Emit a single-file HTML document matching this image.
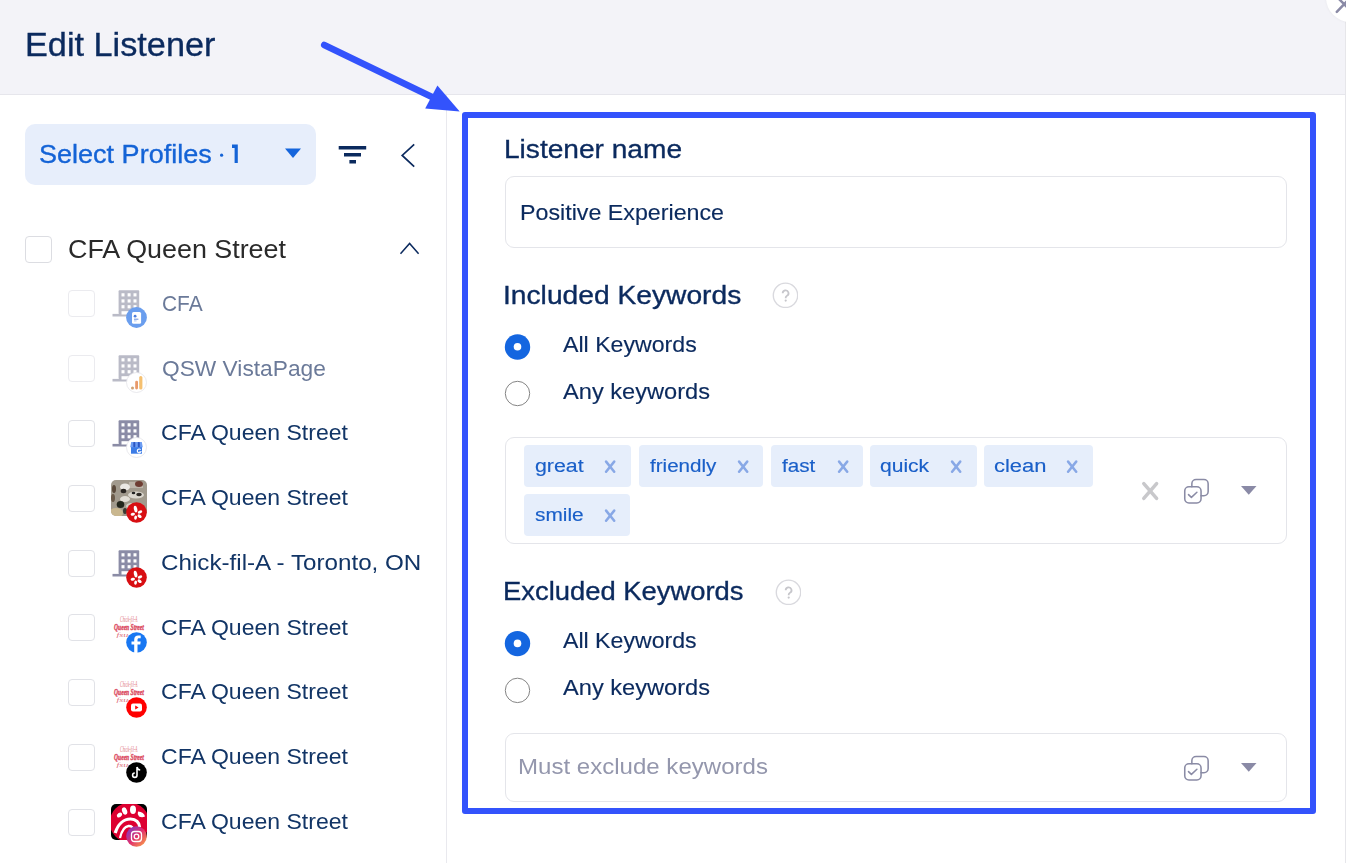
<!DOCTYPE html>
<html><head><meta charset="utf-8"><style>
html,body{margin:0;padding:0;width:1346px;height:863px;overflow:hidden;background:#fff;font-family:"Liberation Sans",sans-serif}
.abs{position:absolute}
.t{position:absolute;white-space:nowrap;transform-origin:0 0}
.cb{position:absolute;width:25px;height:25px;border:1px solid #dcdde2;border-radius:4px;box-sizing:content-box}
.chip{position:absolute;background:#e6eefb;border-radius:4px}
.box{position:absolute;border:1px solid #e4e5ea;border-radius:9px;background:#fff}
.photo{width:36px;height:36px;border-radius:5px;overflow:hidden;background:
 radial-gradient(circle at 30% 70%, #2f2f28 0 4px, transparent 5px),
 radial-gradient(circle at 65% 40%, #1e1e1e 0 3px, transparent 4px),
 radial-gradient(circle at 20% 30%, #e8e4dc 0 4px, transparent 5px),
 radial-gradient(circle at 80% 15%, #6b2a20 0 3px, transparent 4px),
 linear-gradient(135deg,#8d857a,#b4ad9f 40%,#6f685c 70%,#c9b68f)}
</style></head><body>
<div class="abs" style="left:0;top:0;width:1346px;height:94px;background:#f3f3f8;border-bottom:1px solid #e6e6ec"></div>
<div class="abs" style="left:446px;top:95px;width:1px;height:768px;background:#e9e9ee"></div>
<div class="abs" style="left:1345px;top:0;width:1px;height:863px;background:#e6e6ea"></div>
<div class="abs" style="left:1325.5px;top:-27.5px;width:49px;height:49px;border-radius:50%;background:#fff;box-shadow:0 0 3px rgba(0,0,0,0.06)"></div>
<svg class="abs" style="left:1333.5px;top:-6.3px" width="20" height="20" viewBox="0 0 20 20"><path d="M2.8 17.8L17.5 2.5M2.5 2.5L17.5 17.5" stroke="#8a8aa6" stroke-width="2.5" stroke-linecap="round"/></svg>

<div class="abs" style="left:25px;top:124px;width:291px;height:61px;background:#e7eefb;border-radius:10px"></div>
<svg class="abs" style="left:215px;top:140px" width="30" height="28" viewBox="215 140 30 28"><circle cx="221.6" cy="155.2" r="1.6" fill="#1463d6"/><path d="M234.6 144.5h3.2v18.6h-3.2V148.1h-2.6v-3.6z" fill="#1463d6"/></svg>
<svg class="abs" style="left:284px;top:148px" width="18" height="11" viewBox="0 0 18 11"><path d="M1 0.5h16L9 10z" fill="#1565dc"/></svg>
<svg class="abs" style="left:337px;top:144px" width="32" height="22" viewBox="0 0 32 22"><path d="M1.7 3.8h27.5M7 10.7h17M12.4 17.7h6.6" stroke="#0b2a5e" stroke-width="3.5"/></svg>
<svg class="abs" style="left:398px;top:141px" width="20" height="28" viewBox="0 0 20 28"><path d="M16.2 3.4L4.2 14.4l12 11.3" fill="none" stroke="#0b2a5e" stroke-width="1.7"/></svg>

<div class="cb" style="left:25px;top:236px"></div>
<svg class="abs" style="left:396px;top:238px" width="28" height="20" viewBox="0 0 28 20"><path d="M4.5 15.8L13.6 5.4L22.6 15.8" fill="none" stroke="#0b2a5e" stroke-width="1.5"/></svg>
<svg class="abs" style="left:111px;top:285px" width="36" height="36" viewBox="0 0 36 36"><rect x="7.6" y="5.35" width="20.6" height="23.8" rx="0.8" fill="#babbc7"/><rect x="1.5" y="28.9" width="14.5" height="2.6" fill="#babbc7"/><rect x="10.5" y="8.25" width="3" height="3.2" fill="#fff"/><rect x="10.5" y="14.35" width="3" height="3.2" fill="#fff"/><rect x="10.5" y="20.15" width="3" height="3.2" fill="#fff"/><rect x="16.6" y="8.25" width="3" height="3.2" fill="#fff"/><rect x="16.6" y="14.35" width="3" height="3.2" fill="#fff"/><rect x="16.6" y="20.15" width="3" height="3.2" fill="#fff"/><rect x="22.5" y="8.25" width="3" height="3.2" fill="#fff"/><rect x="22.5" y="14.35" width="3" height="3.2" fill="#fff"/><rect x="22.5" y="20.15" width="3" height="3.2" fill="#fff"/><rect x="10.5" y="26.2" width="9" height="3.3" fill="#fff"/></svg><svg class="abs" style="left:126.0px;top:307.4px" width="21" height="21" viewBox="0 0 21 21"><circle cx="10.5" cy="10.5" r="10.4" fill="#6a9eee"/><rect x="6" y="5" width="9.1" height="11.8" rx="1.6" fill="#fff"/><circle cx="9.1" cy="9.2" r="1.4" fill="#4f7fdc"/><path d="M8 12.2h4.4" stroke="#5580d8" stroke-width="0.9"/><path d="M8 13.9h2.6" stroke="#9ab8ee" stroke-width="0.8"/></svg><div class="cb" style="left:68px;top:290.0px;border-color:#ebebef"></div><svg class="abs" style="left:111px;top:349.9px" width="36" height="36" viewBox="0 0 36 36"><rect x="7.6" y="5.35" width="20.6" height="23.8" rx="0.8" fill="#babbc7"/><rect x="1.5" y="28.9" width="14.5" height="2.6" fill="#babbc7"/><rect x="10.5" y="8.25" width="3" height="3.2" fill="#fff"/><rect x="10.5" y="14.35" width="3" height="3.2" fill="#fff"/><rect x="10.5" y="20.15" width="3" height="3.2" fill="#fff"/><rect x="16.6" y="8.25" width="3" height="3.2" fill="#fff"/><rect x="16.6" y="14.35" width="3" height="3.2" fill="#fff"/><rect x="16.6" y="20.15" width="3" height="3.2" fill="#fff"/><rect x="22.5" y="8.25" width="3" height="3.2" fill="#fff"/><rect x="22.5" y="14.35" width="3" height="3.2" fill="#fff"/><rect x="22.5" y="20.15" width="3" height="3.2" fill="#fff"/><rect x="10.5" y="26.2" width="9" height="3.3" fill="#fff"/></svg><svg class="abs" style="left:126.0px;top:372.3px" width="21" height="21" viewBox="0 0 21 21"><circle cx="10.5" cy="10.5" r="10" fill="#fff" stroke="#e3e3e8" stroke-width="0.8"/><rect x="13.2" y="3.9" width="3.2" height="13.5" rx="1.5" fill="#f5c070"/><rect x="9.2" y="8.7" width="2.8" height="8.7" rx="1.4" fill="#e99a6a"/><circle cx="6.5" cy="15.9" r="1.5" fill="#cfa274"/></svg><div class="cb" style="left:68px;top:354.9px;border-color:#ebebef"></div><svg class="abs" style="left:111px;top:414.75px" width="36" height="36" viewBox="0 0 36 36"><rect x="7.6" y="5.35" width="20.6" height="23.8" rx="0.8" fill="#8b8ca6"/><rect x="1.5" y="28.9" width="14.5" height="2.6" fill="#8b8ca6"/><rect x="10.5" y="8.25" width="3" height="3.2" fill="#fff"/><rect x="10.5" y="14.35" width="3" height="3.2" fill="#fff"/><rect x="10.5" y="20.15" width="3" height="3.2" fill="#fff"/><rect x="16.6" y="8.25" width="3" height="3.2" fill="#fff"/><rect x="16.6" y="14.35" width="3" height="3.2" fill="#fff"/><rect x="16.6" y="20.15" width="3" height="3.2" fill="#fff"/><rect x="22.5" y="8.25" width="3" height="3.2" fill="#fff"/><rect x="22.5" y="14.35" width="3" height="3.2" fill="#fff"/><rect x="22.5" y="20.15" width="3" height="3.2" fill="#fff"/><rect x="10.5" y="26.2" width="9" height="3.3" fill="#fff"/></svg><svg class="abs" style="left:126.0px;top:437.1px" width="21" height="21" viewBox="0 0 21 21"><circle cx="10.5" cy="10.5" r="10" fill="#fff" stroke="#e3e3e8" stroke-width="0.8"/><rect x="5" y="9.5" width="11" height="7.2" fill="#3c7ce6"/><path d="M5.2 4.9h10.6l1 5.3H4.2z" fill="#6c9cf2"/><rect x="7.3" y="4.9" width="2" height="5.4" rx="0.8" fill="#2b55c2"/><rect x="11.8" y="4.9" width="2" height="5.4" rx="0.8" fill="#2b55c2"/><path d="M14.6 12.6a1.9 1.9 0 1 0 0.3 2.2h-1.5" fill="none" stroke="#fff" stroke-width="1.2"/></svg><div class="cb" style="left:68px;top:419.8px;border-color:#e1e2e7"></div><svg class="abs" style="left:111px;top:479.6px" width="36" height="36" viewBox="0 0 36 36"><defs><clipPath id="pc"><rect width="36" height="36" rx="5"/></clipPath><filter id="bl"><feGaussianBlur stdDeviation="0.7"/></filter></defs><g clip-path="url(#pc)"><rect width="36" height="36" fill="#a19a8d"/><g filter="url(#bl)"><rect x="18" y="2" width="14" height="6" fill="#bdb6aa"/><ellipse cx="14" cy="7" rx="5" ry="3.5" fill="#ebe9e4"/><ellipse cx="25" cy="15" rx="8" ry="3.5" fill="#dcd8d0"/><ellipse cx="14" cy="19" rx="5" ry="3" fill="#e2ded6"/><ellipse cx="28" cy="4" rx="4" ry="3" fill="#6e3c33"/><ellipse cx="12.5" cy="11" rx="2.8" ry="2.2" fill="#2a2622"/><ellipse cx="22.5" cy="13" rx="1.8" ry="1.3" fill="#222"/><ellipse cx="28" cy="14.5" rx="2.8" ry="1.8" fill="#2e2b26"/><ellipse cx="3" cy="9" rx="2" ry="4" fill="#5a4a3a"/><ellipse cx="2" cy="18" rx="2" ry="4" fill="#6a5a48"/><ellipse cx="9.5" cy="24.5" rx="3.8" ry="3.6" fill="#24261f"/><ellipse cx="5" cy="33" rx="7" ry="5" fill="#c9b78f"/><ellipse cx="20" cy="26" rx="5" ry="3" fill="#d4d0c6"/><ellipse cx="14" cy="31" rx="2" ry="3" fill="#3a3a32"/></g></g></svg><svg class="abs" style="left:126.0px;top:502.0px" width="21" height="21" viewBox="0 0 21 21"><circle cx="10.5" cy="10.5" r="10.3" fill="#d80e12"/><g fill="#fff"><ellipse cx="9.6" cy="7.2" rx="1.7" ry="3.4" transform="rotate(-12 9.6 7.2)"/><ellipse cx="14" cy="10" rx="2.4" ry="1.5" transform="rotate(-25 14 10)"/><ellipse cx="13.6" cy="14.2" rx="2.3" ry="1.5" transform="rotate(35 13.6 14.2)"/><ellipse cx="9.6" cy="15.6" rx="1.4" ry="2.2" transform="rotate(10 9.6 15.6)"/><ellipse cx="6.8" cy="12.2" rx="2.2" ry="1.5" transform="rotate(-10 6.8 12.2)"/></g></svg><div class="cb" style="left:68px;top:484.6px;border-color:#e1e2e7"></div><svg class="abs" style="left:111px;top:544.5px" width="36" height="36" viewBox="0 0 36 36"><rect x="7.6" y="5.35" width="20.6" height="23.8" rx="0.8" fill="#8b8ca6"/><rect x="1.5" y="28.9" width="14.5" height="2.6" fill="#8b8ca6"/><rect x="10.5" y="8.25" width="3" height="3.2" fill="#fff"/><rect x="10.5" y="14.35" width="3" height="3.2" fill="#fff"/><rect x="10.5" y="20.15" width="3" height="3.2" fill="#fff"/><rect x="16.6" y="8.25" width="3" height="3.2" fill="#fff"/><rect x="16.6" y="14.35" width="3" height="3.2" fill="#fff"/><rect x="16.6" y="20.15" width="3" height="3.2" fill="#fff"/><rect x="22.5" y="8.25" width="3" height="3.2" fill="#fff"/><rect x="22.5" y="14.35" width="3" height="3.2" fill="#fff"/><rect x="22.5" y="20.15" width="3" height="3.2" fill="#fff"/><rect x="10.5" y="26.2" width="9" height="3.3" fill="#fff"/></svg><svg class="abs" style="left:126.0px;top:566.9px" width="21" height="21" viewBox="0 0 21 21"><circle cx="10.5" cy="10.5" r="10.3" fill="#d80e12"/><g fill="#fff"><ellipse cx="9.6" cy="7.2" rx="1.7" ry="3.4" transform="rotate(-12 9.6 7.2)"/><ellipse cx="14" cy="10" rx="2.4" ry="1.5" transform="rotate(-25 14 10)"/><ellipse cx="13.6" cy="14.2" rx="2.3" ry="1.5" transform="rotate(35 13.6 14.2)"/><ellipse cx="9.6" cy="15.6" rx="1.4" ry="2.2" transform="rotate(10 9.6 15.6)"/><ellipse cx="6.8" cy="12.2" rx="2.2" ry="1.5" transform="rotate(-10 6.8 12.2)"/></g></svg><div class="cb" style="left:68px;top:549.5px;border-color:#e1e2e7"></div><svg class="abs" style="left:111px;top:609.4px" width="36" height="36" viewBox="0 0 36 36"><g fill="#e0707c" font-family="Liberation Serif" font-style="italic"><text x="9" y="12.6" font-size="7.5" textLength="17.5" lengthAdjust="spacingAndGlyphs">Chick-fil-A</text><text x="3.1" y="21.3" font-size="8.6" font-weight="bold" textLength="29.7" lengthAdjust="spacingAndGlyphs" fill="#dc5066" stroke="#dc5066" stroke-width="0.5">Queen Street</text><text x="5.5" y="27.6" font-size="6" textLength="12" lengthAdjust="spacingAndGlyphs">fsu</text></g></svg><svg class="abs" style="left:126.0px;top:631.8px" width="21" height="21" viewBox="0 0 21 21"><circle cx="10.5" cy="10.5" r="10.3" fill="#1877f2"/><path d="M11.5 21V12.5h2.8l.4-3h-3.2V7.8c0-.9.3-1.5 1.5-1.5h1.7V3.6c-.3 0-1.3-.1-2.5-.1-2.4 0-4 1.5-4 4.1v2h-2.7v3h2.7V21z" fill="#fff"/></svg><div class="cb" style="left:68px;top:614.4px;border-color:#e1e2e7"></div><svg class="abs" style="left:111px;top:674.2px" width="36" height="36" viewBox="0 0 36 36"><g fill="#e0707c" font-family="Liberation Serif" font-style="italic"><text x="9" y="12.6" font-size="7.5" textLength="17.5" lengthAdjust="spacingAndGlyphs">Chick-fil-A</text><text x="3.1" y="21.3" font-size="8.6" font-weight="bold" textLength="29.7" lengthAdjust="spacingAndGlyphs" fill="#dc5066" stroke="#dc5066" stroke-width="0.5">Queen Street</text><text x="5.5" y="27.6" font-size="6" textLength="12" lengthAdjust="spacingAndGlyphs">fsu</text></g></svg><svg class="abs" style="left:126.0px;top:696.6px" width="21" height="21" viewBox="0 0 21 21"><circle cx="10.5" cy="10.5" r="10.3" fill="#f00"/><rect x="5" y="6.5" width="11" height="8" rx="2" fill="#fff"/><path d="M9.2 8.5v4l3.4-2z" fill="#f00"/></svg><div class="cb" style="left:68px;top:679.2px;border-color:#e1e2e7"></div><svg class="abs" style="left:111px;top:739.1px" width="36" height="36" viewBox="0 0 36 36"><g fill="#e0707c" font-family="Liberation Serif" font-style="italic"><text x="9" y="12.6" font-size="7.5" textLength="17.5" lengthAdjust="spacingAndGlyphs">Chick-fil-A</text><text x="3.1" y="21.3" font-size="8.6" font-weight="bold" textLength="29.7" lengthAdjust="spacingAndGlyphs" fill="#dc5066" stroke="#dc5066" stroke-width="0.5">Queen Street</text><text x="5.5" y="27.6" font-size="6" textLength="12" lengthAdjust="spacingAndGlyphs">fsu</text></g></svg><svg class="abs" style="left:126.0px;top:761.5px" width="21" height="21" viewBox="0 0 21 21"><circle cx="10.5" cy="10.5" r="10.3" fill="#000"/><path d="M11 5v8.2a2.2 2.2 0 1 1-2.2-2.2M11 5c.3 1.8 1.5 2.8 3.2 3" fill="none" stroke="#fff" stroke-width="1.6"/></svg><div class="cb" style="left:68px;top:744.1px;border-color:#e1e2e7"></div><svg class="abs" style="left:111px;top:804.0px" width="36" height="36" viewBox="0 0 36 36"><defs><clipPath id="ic"><rect width="36" height="36" rx="5"/></clipPath></defs><g clip-path="url(#ic)"><rect width="36" height="36" fill="#000"/><circle cx="18.5" cy="18.5" r="19.8" fill="#dd0031"/><ellipse cx="8.5" cy="11" rx="2.9" ry="2.1" transform="rotate(-35 8.5 11)" fill="#fff"/><ellipse cx="13.6" cy="7" rx="2.5" ry="3.7" transform="rotate(-20 13.6 7)" fill="#fff"/><ellipse cx="22" cy="5.8" rx="3" ry="4.2" fill="#fff"/><path d="M27 7.5Q33 8 34 12.5Q31 14 28 12.5Q26 10.5 27 7.5z" fill="#fff"/><path d="M4.2 29C7 20 13 15 19.5 15C25 15 28.5 18.5 28.5 23" fill="none" stroke="#fff" stroke-width="3.2"/><path d="M9 34C10.5 27 14 22.5 17.5 22C20.5 21.8 22 23.5 22 25.5" fill="none" stroke="#fff" stroke-width="2.3"/></g></svg><svg class="abs" style="left:126.0px;top:826.4px" width="21" height="21" viewBox="0 0 21 21"><defs><linearGradient id="ig" x1="0" y1="0" x2="1" y2="1"><stop offset="0" stop-color="#6a3fd8"/><stop offset="0.5" stop-color="#e1306c"/><stop offset="1" stop-color="#fcb045"/></linearGradient></defs><circle cx="10.5" cy="10.5" r="10.3" fill="url(#ig)"/><rect x="5.5" y="5.5" width="10" height="10" rx="3" fill="none" stroke="#fff" stroke-width="1.3"/><circle cx="10.5" cy="10.5" r="2.3" fill="none" stroke="#fff" stroke-width="1.3"/></svg><div class="cb" style="left:68px;top:809.0px;border-color:#e1e2e7"></div>

<div class="box" style="left:505px;top:176px;width:780px;height:70px"></div>
<div class="box" style="left:505px;top:437px;width:780px;height:105px"></div>
<div class="box" style="left:505px;top:733px;width:780px;height:67px"></div>
<div class="chip" style="left:524.1px;top:445.1px;width:106.7px;height:41.5px"></div><svg class="abs" style="left:604.4px;top:459.5px" width="12" height="14" viewBox="0 0 12 14"><path d="M2.1 1.6L10.2 11.8M10.2 1.6L2.1 11.8" stroke="#88a8e6" stroke-width="2.5" stroke-linecap="round"/></svg><div class="chip" style="left:638.5px;top:445.1px;width:124.2px;height:41.5px"></div><svg class="abs" style="left:737.2px;top:459.5px" width="12" height="14" viewBox="0 0 12 14"><path d="M2.1 1.6L10.2 11.8M10.2 1.6L2.1 11.8" stroke="#88a8e6" stroke-width="2.5" stroke-linecap="round"/></svg><div class="chip" style="left:771.3px;top:445.1px;width:91.5px;height:41.5px"></div><svg class="abs" style="left:836.7px;top:459.5px" width="12" height="14" viewBox="0 0 12 14"><path d="M2.1 1.6L10.2 11.8M10.2 1.6L2.1 11.8" stroke="#88a8e6" stroke-width="2.5" stroke-linecap="round"/></svg><div class="chip" style="left:870.2px;top:445.1px;width:106.5px;height:41.5px"></div><svg class="abs" style="left:950.4px;top:459.5px" width="12" height="14" viewBox="0 0 12 14"><path d="M2.1 1.6L10.2 11.8M10.2 1.6L2.1 11.8" stroke="#88a8e6" stroke-width="2.5" stroke-linecap="round"/></svg><div class="chip" style="left:984.2px;top:445.1px;width:108.8px;height:41.5px"></div><svg class="abs" style="left:1066.4px;top:459.5px" width="12" height="14" viewBox="0 0 12 14"><path d="M2.1 1.6L10.2 11.8M10.2 1.6L2.1 11.8" stroke="#88a8e6" stroke-width="2.5" stroke-linecap="round"/></svg><div class="chip" style="left:524.1px;top:494.3px;width:105.7px;height:41.5px"></div><svg class="abs" style="left:603.7px;top:508.7px" width="12" height="14" viewBox="0 0 12 14"><path d="M2.1 1.6L10.2 11.8M10.2 1.6L2.1 11.8" stroke="#88a8e6" stroke-width="2.5" stroke-linecap="round"/></svg>

<svg class="abs" style="left:772px;top:282px" width="26" height="26" viewBox="0 0 26 26"><circle cx="13.5" cy="13.3" r="12.2" fill="none" stroke="#d9d9de" stroke-width="1.4"/><path d="M10.7 11.3a2.9 2.9 0 1 1 4.3 2.5c-0.9 0.5-1.3 1-1.3 2v0.4" fill="none" stroke="#c6c6cb" stroke-width="1.8"/><circle cx="13.7" cy="18.6" r="1.1" fill="#c6c6cb"/></svg>
<svg class="abs" style="left:775px;top:579px" width="26" height="26" viewBox="0 0 26 26"><circle cx="13.5" cy="13.3" r="12.2" fill="none" stroke="#d9d9de" stroke-width="1.4"/><path d="M10.7 11.3a2.9 2.9 0 1 1 4.3 2.5c-0.9 0.5-1.3 1-1.3 2v0.4" fill="none" stroke="#c6c6cb" stroke-width="1.8"/><circle cx="13.7" cy="18.6" r="1.1" fill="#c6c6cb"/></svg>

<svg class="abs" style="left:504px;top:333px" width="28" height="28" viewBox="0 0 28 28"><circle cx="13.5" cy="14" r="12.7" fill="#1466e0"/><circle cx="13.5" cy="13.7" r="3.8" fill="#fff"/></svg>
<svg class="abs" style="left:504px;top:380px" width="28" height="28" viewBox="0 0 28 28"><circle cx="13.5" cy="13.5" r="12.2" fill="#fff" stroke="#858585" stroke-width="1"/></svg>
<svg class="abs" style="left:504px;top:630px" width="28" height="28" viewBox="0 0 28 28"><circle cx="13.5" cy="13.6" r="12.7" fill="#1466e0"/><circle cx="13.5" cy="13.4" r="3.8" fill="#fff"/></svg>
<svg class="abs" style="left:504px;top:677px" width="28" height="28" viewBox="0 0 28 28"><circle cx="13.5" cy="13.4" r="12.2" fill="#fff" stroke="#858585" stroke-width="1"/></svg>

<svg class="abs" style="left:1140px;top:480px" width="20" height="22" viewBox="0 0 20 22"><path d="M3.8 3.6L16.6 18.4M16.6 3.6L3.8 18.4" stroke="#c8c8cb" stroke-width="3.5" stroke-linecap="round"/></svg>
<svg class="abs" style="left:1178px;top:472px" width="36" height="36" viewBox="1178 472 36 36"><g fill="none" stroke="#8a8ba5" stroke-width="1.55" stroke-linecap="round" stroke-linejoin="round"><rect x="1184.75" y="486.75" width="16.3" height="16.3" rx="4.2"/><path d="M1191.85 486.75V483.65a4.2 4.2 0 0 1 4.2-4.2H1203.95a4.2 4.2 0 0 1 4.2 4.2V491.45a4.2 4.2 0 0 1-4.2 4.2H1201.05"/><path d="M1188.5 494.6L1191.4 497.4L1196.9 492.3"/></g></svg>
<svg class="abs" style="left:1240px;top:485px" width="18" height="11" viewBox="0 0 18 11"><path d="M1 1h15.5L8.75 9.8z" fill="#8a8aa6"/></svg>
<svg class="abs" style="left:1178px;top:749.2px" width="36" height="36" viewBox="1178 472 36 36"><g fill="none" stroke="#8a8ba5" stroke-width="1.55" stroke-linecap="round" stroke-linejoin="round"><rect x="1184.75" y="486.75" width="16.3" height="16.3" rx="4.2"/><path d="M1191.85 486.75V483.65a4.2 4.2 0 0 1 4.2-4.2H1203.95a4.2 4.2 0 0 1 4.2 4.2V491.45a4.2 4.2 0 0 1-4.2 4.2H1201.05"/><path d="M1188.5 494.6L1191.4 497.4L1196.9 492.3"/></g></svg>
<svg class="abs" style="left:1240px;top:762px" width="18" height="11" viewBox="0 0 18 11"><path d="M1 1h15.5L8.75 9.8z" fill="#8a8aa6"/></svg>

<div class="t" style="left:24.76px;top:27.78px;font-size:33.33px;line-height:33.33px;color:#0b2a5e;font-weight:400;transform:scaleX(1.0277);-webkit-text-stroke:0.35px currentColor;">Edit Listener</div><div class="t" style="left:39.14px;top:141.04px;font-size:26.23px;line-height:26.23px;color:#1463d6;font-weight:400;transform:scaleX(1.0307);-webkit-text-stroke:0.35px currentColor;">Select Profiles</div><div class="t" style="left:67.57px;top:236.12px;font-size:26.09px;line-height:26.09px;color:#2a2a2a;font-weight:400;transform:scaleX(1.0298);">CFA Queen Street</div><div class="t" style="left:504.16px;top:135.57px;font-size:26.38px;line-height:26.38px;color:#0b2a5e;font-weight:400;transform:scaleX(1.0650);-webkit-text-stroke:0.35px currentColor;">Listener name</div><div class="t" style="left:519.64px;top:202.72px;font-size:21.30px;line-height:21.30px;color:#0b2a5e;font-weight:400;transform:scaleX(1.0908);-webkit-text-stroke:0.15px currentColor;">Positive Experience</div><div class="t" style="left:502.80px;top:283.26px;font-size:25.80px;line-height:25.80px;color:#0b2a5e;font-weight:400;transform:scaleX(1.0930);-webkit-text-stroke:0.35px currentColor;">Included Keywords</div><div class="t" style="left:563.29px;top:333.93px;font-size:22.46px;line-height:22.46px;color:#0b2a5e;font-weight:400;transform:scaleX(1.0302);-webkit-text-stroke:0.15px currentColor;">All Keywords</div><div class="t" style="left:563.29px;top:381.23px;font-size:21.88px;line-height:21.88px;color:#0b2a5e;font-weight:400;transform:scaleX(1.0798);-webkit-text-stroke:0.15px currentColor;">Any keywords</div><div class="t" style="left:503.37px;top:579.06px;font-size:25.80px;line-height:25.80px;color:#0b2a5e;font-weight:400;transform:scaleX(1.0612);-webkit-text-stroke:0.35px currentColor;">Excluded Keywords</div><div class="t" style="left:563.29px;top:630.00px;font-size:21.74px;line-height:21.74px;color:#0b2a5e;font-weight:400;transform:scaleX(1.0635);-webkit-text-stroke:0.15px currentColor;">All Keywords</div><div class="t" style="left:563.29px;top:677.20px;font-size:21.74px;line-height:21.74px;color:#0b2a5e;font-weight:400;transform:scaleX(1.0869);-webkit-text-stroke:0.15px currentColor;">Any keywords</div><div class="t" style="left:518.39px;top:757.12px;font-size:21.30px;line-height:21.30px;color:#9497ad;font-weight:400;transform:scaleX(1.1291);">Must exclude keywords</div><div class="t" style="left:161.74px;top:293.05px;font-size:22.03px;line-height:22.03px;color:#6b7a99;font-weight:400;transform:scaleX(0.9511);">CFA</div><div class="t" style="left:161.64px;top:357.55px;font-size:22.03px;line-height:22.03px;color:#6b7a99;font-weight:400;transform:scaleX(1.0325);">QSW VistaPage</div><div class="t" style="left:161.31px;top:422.05px;font-size:22.03px;line-height:22.03px;color:#123566;font-weight:400;transform:scaleX(1.0462);">CFA Queen Street</div><div class="t" style="left:161.31px;top:486.55px;font-size:22.03px;line-height:22.03px;color:#123566;font-weight:400;transform:scaleX(1.0462);">CFA Queen Street</div><div class="t" style="left:161.19px;top:552.05px;font-size:22.03px;line-height:22.03px;color:#123566;font-weight:400;transform:scaleX(1.0988);">Chick-fil-A - Toronto, ON</div><div class="t" style="left:161.31px;top:616.55px;font-size:22.03px;line-height:22.03px;color:#123566;font-weight:400;transform:scaleX(1.0462);">CFA Queen Street</div><div class="t" style="left:161.31px;top:681.05px;font-size:22.03px;line-height:22.03px;color:#123566;font-weight:400;transform:scaleX(1.0462);">CFA Queen Street</div><div class="t" style="left:161.31px;top:745.55px;font-size:22.03px;line-height:22.03px;color:#123566;font-weight:400;transform:scaleX(1.0462);">CFA Queen Street</div><div class="t" style="left:161.31px;top:811.05px;font-size:22.03px;line-height:22.03px;color:#123566;font-weight:400;transform:scaleX(1.0462);">CFA Queen Street</div><div class="t" style="left:534.71px;top:456.66px;font-size:18.30px;line-height:18.30px;color:#1a5fc8;font-weight:400;transform:scaleX(1.1676);-webkit-text-stroke:0.15px currentColor;">great</div><div class="t" style="left:649.89px;top:456.66px;font-size:18.30px;line-height:18.30px;color:#1a5fc8;font-weight:400;transform:scaleX(1.1265);-webkit-text-stroke:0.15px currentColor;">friendly</div><div class="t" style="left:782.09px;top:456.66px;font-size:18.30px;line-height:18.30px;color:#1a5fc8;font-weight:400;transform:scaleX(1.1297);-webkit-text-stroke:0.15px currentColor;">fast</div><div class="t" style="left:880.34px;top:456.66px;font-size:18.30px;line-height:18.30px;color:#1a5fc8;font-weight:400;transform:scaleX(1.1511);-webkit-text-stroke:0.15px currentColor;">quick</div><div class="t" style="left:994.09px;top:456.66px;font-size:18.30px;line-height:18.30px;color:#1a5fc8;font-weight:400;transform:scaleX(1.1994);-webkit-text-stroke:0.15px currentColor;">clean</div><div class="t" style="left:534.77px;top:506.06px;font-size:18.30px;line-height:18.30px;color:#1a5fc8;font-weight:400;transform:scaleX(1.1419);-webkit-text-stroke:0.15px currentColor;">smile</div>

<svg class="abs" style="left:0;top:0" width="1346" height="863" viewBox="0 0 1346 863">
<rect x="465" y="115" width="848" height="696" fill="none" stroke="#3353fc" stroke-width="6" stroke-linejoin="round"/>
<path d="M324.2 45L432 97" stroke="#3353fc" stroke-width="6.5" stroke-linecap="round"/>
<path d="M459.7 111.6L437.4 85.5L425.2 108.4z" fill="#3353fc"/>
</svg>
</body></html>
